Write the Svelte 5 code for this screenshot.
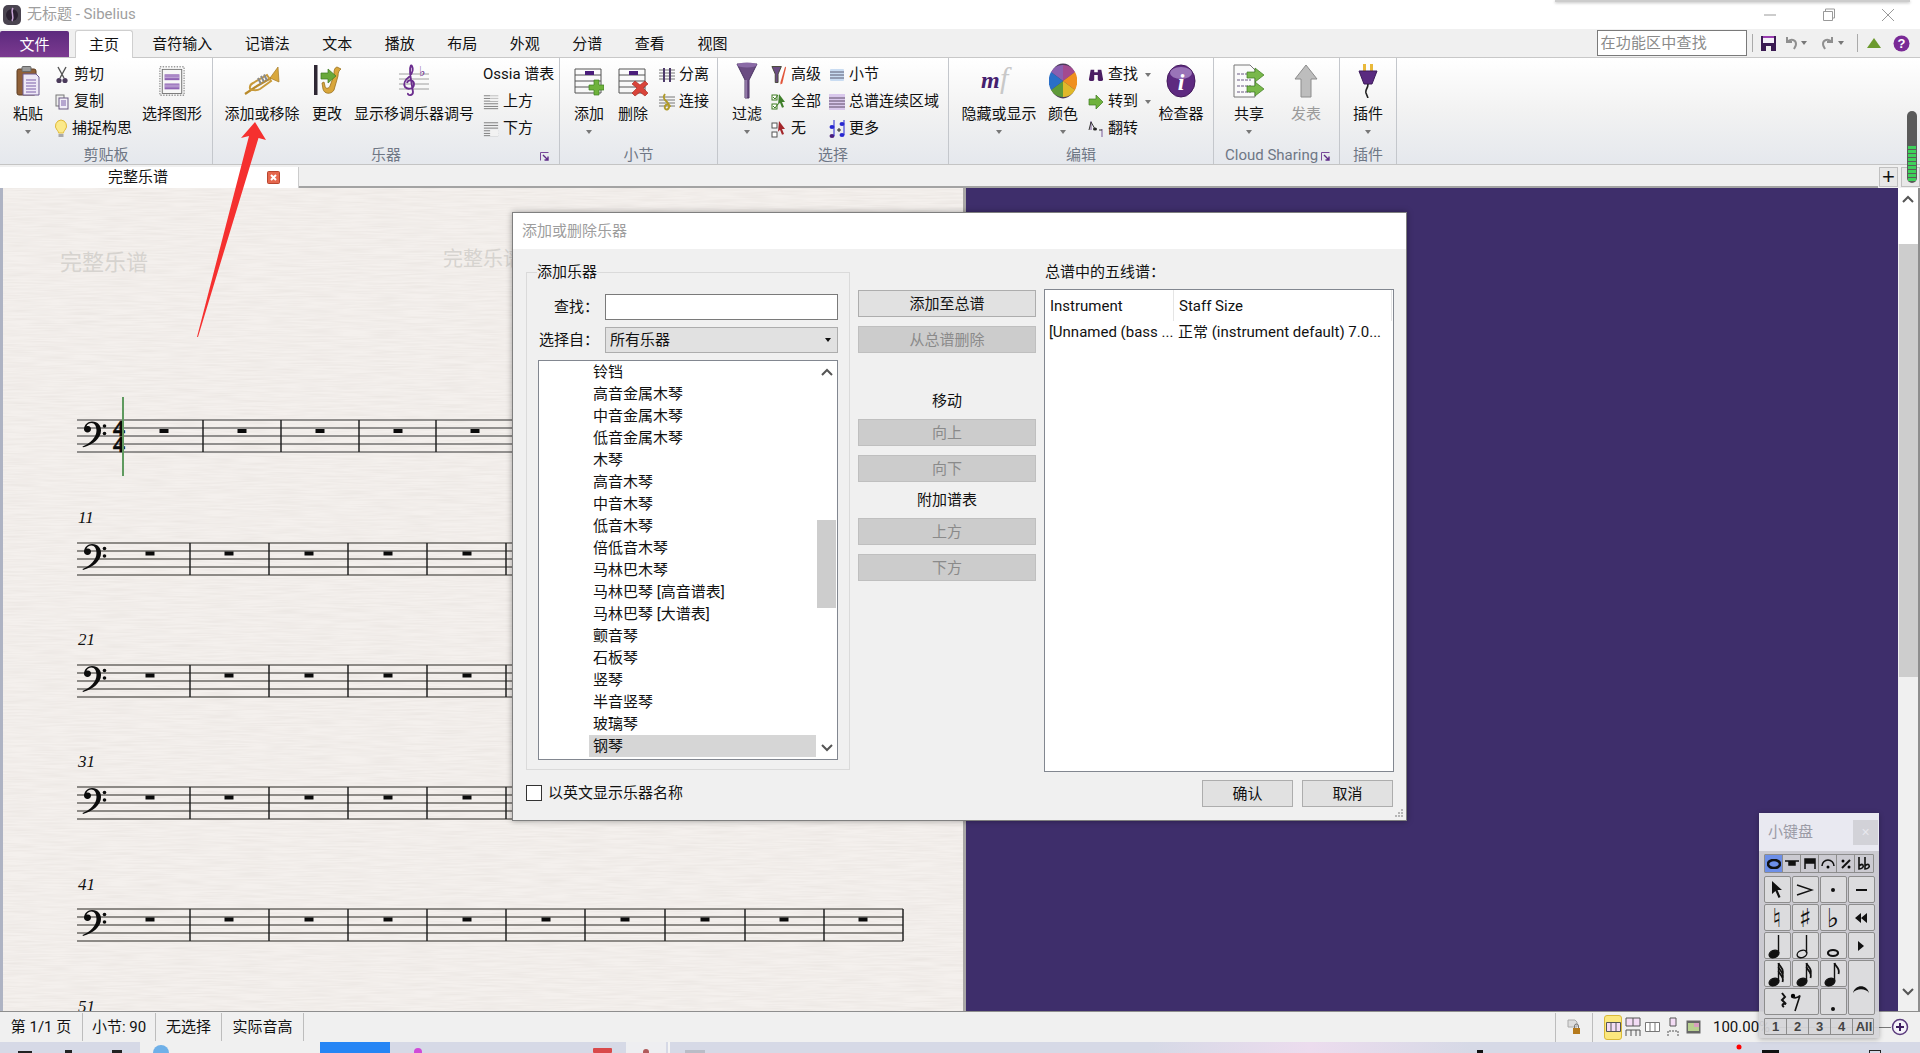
<script>
  const tabs = ['音符输入', '记谱法', '文本', '播放', '布局', '外观', '分谱', '查看', '视图'];
  const listItems = ['铃铛', '高音金属木琴', '中音金属木琴', '低音金属木琴', '木琴', '高音木琴', '中音木琴', '低音木琴', '倍低音木琴', '马林巴木琴', '马林巴琴 [高音谱表]', '马林巴琴 [大谱表]', '颤音琴', '石板琴', '竖琴', '半音竖琴', '玻璃琴', '钢琴'];
  const staves = [
    { y: 543, label: '11', labelY: 523 },
    { y: 665, label: '21', labelY: 645 },
    { y: 787, label: '31', labelY: 767 },
    { y: 909, label: '41', labelY: 890 },
    { y: 1031, label: '51', labelY: 1012 }
  ].map((s) => ({ ...s, y: s.y - 188, labelY: s.labelY - 188 }));
  const bars = [190, 269, 348, 427, 506, 585, 665, 745, 824, 903];
  const rests = [150, 229, 309, 388, 467, 546, 625, 705, 784, 863];
  const firstBars = [203, 281, 359, 436, 514, 592, 670, 748, 826, 904];
  const firstRests = [164, 242, 320, 398, 475, 553, 631, 709, 787, 865];
  const lineOffsets = [0, 8, 16, 24, 32];
</script>

{#snippet ic(name)}
  {#if name === 'paste'}
    <svg width="24" height="30" viewBox="0 0 24 30"><rect x="1" y="3" width="19" height="26" rx="2" fill="#8f6038" stroke="#5c3d22"/><rect x="6" y="0.5" width="9" height="5" rx="1" fill="#9a9a9a" stroke="#666"/><path d="M7 8h13l3 3v18H7z" fill="#eee8f6" stroke="#6d5a92"/><path d="M10 14h10M10 17h10M10 20h10M10 23h10M10 26h10" stroke="#7a5ea8" stroke-width="1.2"/></svg>
  {:else if name === 'cut'}
    <svg width="14" height="18" viewBox="0 0 14 18"><path d="M3 1l6 11M11 1L5 12" stroke="#555" stroke-width="1.4" fill="none"/><circle cx="4" cy="14.5" r="2.6" fill="#4a3a5a"/><circle cx="10" cy="14.5" r="2.6" fill="#4a3a5a"/></svg>
  {:else if name === 'copy'}
    <svg width="14" height="16" viewBox="0 0 14 16"><rect x="1" y="1" width="8" height="11" fill="#eee" stroke="#777"/><rect x="4" y="4" width="9" height="11" fill="#f2eef8" stroke="#6a5a84"/><path d="M6 7h5M6 9h5M6 11h5" stroke="#7a5ea8"/></svg>
  {:else if name === 'bulb'}
    <svg width="14" height="20" viewBox="0 0 14 20"><path d="M7 1a6 6 0 0 1 4 10c-1 1-1.500 2-1.500 3h-5c0-1-.5-2-1.500-3A6 6 0 0 1 7 1z" fill="#fbe98a" stroke="#e0b93a"/><rect x="4.500" y="15" width="5" height="3" fill="#a9a9a9"/></svg>
  {:else if name === 'graphic'}
    <svg width="26" height="30" viewBox="0 0 28 36" preserveAspectRatio="none"><rect x="1" y="1" width="26" height="34" fill="none" stroke="#555" stroke-dasharray="1.500 1.500"/><rect x="3.500" y="4" width="21" height="29" fill="#f7f7f7" stroke="#666"/><rect x="6" y="10" width="16" height="7" fill="#8f63b4"/><rect x="6" y="21" width="16" height="7" fill="#8f63b4"/><path d="M6 12h16M6 14h16M6 23h16M6 25h16" stroke="#e7dcf2" stroke-width=".7"/></svg>
  {:else if name === 'trumpet'}
    <svg width="36" height="30" viewBox="0 0 36 30"><path d="M1 28l12-8 14-8" stroke="#b98a2a" stroke-width="2.200" fill="none"/><path d="M8 24c-3 0-3-5 1-7l14-8 4 6-11 8c-3 2-6 1-8 1z" fill="none" stroke="#c89a3a" stroke-width="2"/><path d="M26 12L34 1l1 15z" fill="#d9a83d" stroke="#a57a24" stroke-width=".7"/><path d="M14 12l3 6M17 10l3 6M20 8.500l3 6" stroke="#8a8a8a" stroke-width="2"/></svg>
  {:else if name === 'change'}
    <svg width="32" height="32" viewBox="0 0 32 32"><rect x="3" y="0" width="3.500" height="30" fill="#2e2733"/><path d="M26 2c-3 1-3 4-3 8l-4 11c-1 3-5 3-5 0l-1-4-2 1 1 6c1 5 8 6 11 1l4-14c0-3 1-6 3-7z" fill="#d9a63b" stroke="#98701d" stroke-width=".8"/><path d="M10 8h7V4l8 7-8 7v-4h-7z" fill="#69a83a" stroke="#3d7a20" stroke-width=".7"/></svg>
  {:else if name === 'key'}
    <svg width="30" height="34" viewBox="0 0 30 34"><path d="M0 10h30M0 15h30M0 20h30M0 25h30" stroke="#888" stroke-width=".8"/><path d="M12 1c3 3 2 8-2 12-4 3-6 7-4 10 3 3 9 2 9-3 0-4-6-5-7-1M12 1c-2 4-1 9 2 27 0 4-6 4-5 1" fill="none" stroke="#6b2d8e" stroke-width="1.800"/><text x="20" y="12" class="flat">♭</text></svg>
  {:else if name === 'up' || name === 'down'}
    <svg width="18" height="18" viewBox="0 0 18 18"><path d="M1 2h16M1 5h16M1 8h16M1 11h16M1 14h16M1 16.500h16" stroke="#666" stroke-width=".9"/>{#if name === 'up'}<rect x="8" y="1" width="9" height="7" fill="#f2f2f2"/><path d="M8 2h9M8 5h9" stroke="#bbb"/>{:else}<rect x="8" y="10" width="9" height="7" fill="#f2f2f2"/>{/if}</svg>
  {:else if name === 'addbar' || name === 'delbar'}
    <svg width="30" height="32" viewBox="0 0 30 32"><path d="M1 4h26M1 10h26M1 16h26M1 22h26M1 28h26" stroke="#555"/><path d="M1 4v24M27 4v24" stroke="#555"/><rect x="11" y="6" width="9" height="4" fill="#4a1d7a"/>{#if name === 'addbar'}<path d="M20 15h5v5h5v5h-5v5h-5v-5h-5v-5h5z" fill="#6fb23c" stroke="#3e7f20" stroke-width=".7"/>{:else}<path d="M14 19l3-3 5 4 5-4 3 3-5 4 5 5-3 3-5-4-5 4-3-3 5-5z" fill="#d9443a" stroke="#a02218" stroke-width=".6"/>{/if}</svg>
  {:else if name === 'split'}
    <svg width="16" height="16" viewBox="0 0 16 16"><path d="M0 3h16M0 6h16M0 9h16M0 12h16" stroke="#777"/><path d="M5 1v14M11 1v14" stroke="#4d3a6a" stroke-width="2"/></svg>
  {:else if name === 'join'}
    <svg width="16" height="18" viewBox="0 0 16 18"><path d="M0 4h16M0 7h16M0 10h16M0 13h16" stroke="#777"/><path d="M6 1c-3 4 0 6 2 8s3 5 1 7c-2 1-4 0-3-3 1-2 5-2 5 1" fill="none" stroke="#b09a2a" stroke-width="2"/></svg>
  {:else if name === 'funnel'}
    <svg width="22" height="38" viewBox="0 0 22 38"><path d="M1 2h20l-8 16v18h-4V18z" fill="#6a4c82" stroke="#4a3362"/><ellipse cx="11" cy="3" rx="10" ry="2.500" fill="#8a6aa6"/><path d="M10 18v18" stroke="#b9a6cc"/></svg>
  {:else if name === 'advfilter'}
    <svg width="17" height="20" viewBox="0 0 17 20"><path d="M1 1h10L7.500 9v9h-3V9z" fill="#6a4c82" stroke="#443"/><path d="M15 1l1 1-4 17-2 1 0-2z" fill="#e2553a"/></svg>
  {:else if name === 'all'}
    <svg width="16" height="18" viewBox="0 0 16 18"><rect x="1" y="2" width="5" height="5" fill="#fff" stroke="#3d7a20"/><rect x="1" y="11" width="5" height="5" fill="#fff" stroke="#3d7a20"/><path d="M8 1l6 8-3 0 2 5-2 .8-2-5-2 2z" fill="#3f7f2a"/><path d="M2 4l2 2 3-4M2 13l2 2 3-4" stroke="#3d7a20" fill="none"/></svg>
  {:else if name === 'none'}
    <svg width="16" height="18" viewBox="0 0 16 18"><rect x="1" y="3" width="5" height="5" fill="#fff" stroke="#555"/><rect x="1" y="12" width="5" height="5" fill="#fff" stroke="#555"/><path d="M8 1l6 8-3 0 2 5-2 .8-2-5-2 2z" fill="#a3262a"/></svg>
  {:else if name === 'bar'}
    <svg width="16" height="14" viewBox="0 0 16 14"><rect x="1" y="1" width="14" height="12" rx="1" fill="#c9dcf2"/><path d="M1 4h14M1 7h14M1 10h14" stroke="#5c5c72"/></svg>
  {:else if name === 'system'}
    <svg width="16" height="16" viewBox="0 0 16 16"><rect x="0" y="0" width="16" height="16" fill="#d9c8ec"/><path d="M0 4h16M0 7h16M0 10h16M0 13h16" stroke="#5c4a66"/></svg>
  {:else if name === 'more'}
    <svg width="16" height="20" viewBox="0 0 16 20"><ellipse cx="3" cy="8" rx="2.500" ry="2" fill="#2727d0"/><ellipse cx="3" cy="17" rx="2.500" ry="2" fill="#4a1d7a"/><ellipse cx="13" cy="5" rx="2.500" ry="2" fill="#2727d0"/><ellipse cx="13" cy="16" rx="2.500" ry="2" fill="#2727d0"/><path d="M5 1v16M15 1v15" stroke="#2727d0"/><path d="M8 11h4M10 9v4" stroke="#222"/></svg>
  {:else if name === 'mf'}
    <svg width="36" height="34" viewBox="0 0 36 34"><text x="0" y="24" class="mf1">m</text><text x="19" y="24" class="mf2">f</text></svg>
  {:else if name === 'wheel'}
    <svg width="28" height="36" viewBox="-14 -18 28 36"><ellipse rx="13.500" ry="17.500" fill="#4a3a5a"/><path d="M0 0L-12-9A14 17 0 0 1 0-16z" fill="#8a5fb0"/><path d="M0 0L0-16A14 17 0 0 1 12-9z" fill="#a34a90"/><path d="M0 0L12-9A14 17 0 0 1 12 9z" fill="#f09020"/><path d="M0 0L12 9A14 17 0 0 1 0 16z" fill="#e0b82a"/><path d="M0 0L0 16A14 17 0 0 1-12 9z" fill="#5f9a38"/><path d="M0 0L-12 9A14 17 0 0 1-12-9z" fill="#2a6fc8"/></svg>
  {:else if name === 'find'}
    <svg width="18" height="18" viewBox="0 0 18 16"><path d="M1 13l2-11h4v3h4V2h4l2 11c0 2.500-6 2.500-6 0V8H7v5c0 2.500-6 2.500-6 0z" fill="#4a1d62"/></svg>
  {:else if name === 'goto'}
    <svg width="16" height="14" viewBox="0 0 16 14"><path d="M1 4h7V0l7 7-7 7v-4H1z" fill="#6fb23c" stroke="#3d7a20" stroke-width=".7"/></svg>
  {:else if name === 'flip'}
    <svg width="16" height="18" viewBox="0 0 16 18"><path d="M3 1v9M14 9v8" stroke="#7a5a9a"/><ellipse cx="7" cy="9" rx="2" ry="1.500" fill="#222"/><path d="M1 10l2-8 4 7M11 10l3 0" stroke="#333" fill="none"/></svg>
  {:else if name === 'info'}
    <svg width="30" height="34" viewBox="0 0 30 34"><ellipse cx="15" cy="17" rx="14" ry="16" fill="#5e2a80" stroke="#43195c"/><ellipse cx="15" cy="9" rx="11" ry="6" fill="#9a74b8"/><text x="15" y="26" class="itxt">i</text></svg>
  {:else if name === 'share'}
    <svg width="32" height="34" viewBox="0 0 32 34"><path d="M1 1h16l5 5v27H1z" fill="#fafafa" stroke="#777"/><path d="M4 10h14M4 16h14M4 22h14M4 28h14" stroke="#6a5a84" stroke-dasharray="3 1"/><path d="M14 8h8V4l9 7-9 7v-4h-8z" fill="#79b84a" stroke="#3d7a20" stroke-width=".7"/><path d="M14 22h8v-4l9 7-9 7v-4h-8z" fill="#79b84a" stroke="#3d7a20" stroke-width=".7"/></svg>
  {:else if name === 'publish'}
    <svg width="24" height="34" viewBox="0 0 24 34"><path d="M12 1l11 14h-6v18H7V15H1z" fill="#bdbdbd" stroke="#8c8c8c"/></svg>
  {:else if name === 'plug'}
    <svg width="22" height="34" viewBox="0 0 22 34"><rect x="6" y="0" width="3" height="8" fill="#e9b93a"/><rect x="13" y="0" width="3" height="8" fill="#e9b93a"/><path d="M2 7h18l-5 13H7z" fill="#5a2a80" stroke="#3c1a5a"/><path d="M11 20c0 5-3 5-2 9l2 5" stroke="#222" stroke-width="1.600" fill="none"/></svg>
  {/if}
{/snippet}

{#snippet big(label, cls, name, arrow = true, off = false)}
  <div class="big {cls}" class:off>
    <div class="bi">{@render ic(name)}</div>
    <div class="bl">{label}</div>
    {#if arrow}<div class="caret"></div>{/if}
  </div>
{/snippet}

{#snippet small(label, name, arrow = false)}
  <div class="small">
    {#if name}<span class="si">{@render ic(name)}</span>{/if}
    <span>{label}</span>
    {#if arrow}<span class="caret tiny"></span>{/if}
  </div>
{/snippet}

{#snippet launcher()}
  <svg class="launch" width="9" height="9" viewBox="0 0 9 9"><path d="M.5 8.500v-8h8" fill="none" stroke="#7a4a9a"/><path d="M3 3l5 5M8 4.500V8H4.500" fill="none" stroke="#5f2a86" stroke-width="1.400"/></svg>
{/snippet}

{#snippet note(flags, kind)}
  <svg width="20" height="26" viewBox="0 0 20 26">
    {#if kind === 'whole'}
      <ellipse cx="10" cy="20" rx="5" ry="3" fill="none" stroke="#111" stroke-width="2.200"/>
    {:else}
      <ellipse cx="7" cy="21" rx="5" ry="3.500" transform="rotate(-20 7 21)" fill={kind === 'half' ? 'none' : '#111'} stroke="#111" stroke-width="1.400"/>
      <path d="M11.500 20V2" stroke="#111" stroke-width="1.400"/>
      {#each Array(flags) as _, i}
        <path d="M11.500 {2 + i * 4}c1 4 6 5 4 11" fill="none" stroke="#111" stroke-width="1.800"/>
      {/each}
    {/if}
  </svg>
{/snippet}

<svg class="defs" width="0" height="0">
  <defs>
    <filter id="fibre" x="0" y="0" width="100%" height="100%">
      <feTurbulence type="fractalNoise" baseFrequency="0.03 0.6" numOctaves="2" seed="4"/>
      <feColorMatrix type="matrix" values="0 0 0 0 0.45  0 0 0 0 0.4  0 0 0 0 0.36  0.22 0 0 0 -0.07"/>
    </filter>
    <linearGradient id="tbglow" x1="0" x2="1" y1="0" y2="0">
      <stop offset="0" stop-color="#d6d9e6"/><stop offset=".5" stop-color="#ecdcee"/><stop offset="1" stop-color="#d6d9e6"/>
    </linearGradient>
  </defs>
  <symbol id="bass" viewBox="0 0 26 27">
    <path d="M3 9C3 4 7 1 11 1c6 0 9 4 9 9 0 8-8 14-18 17l-.5-1c7.500-3 14-9 14-16 0-4.500-2-7.500-5-7.500-2.500 0-4.500 1.500-5 3.500.5-.4 1-.5 1.500-.5 2 0 3 1.500 3 3 0 2-1.500 3.500-3.500 3.500S3 10.500 3 9z" fill="#0c0c0c"/>
    <circle cx="23.500" cy="5.500" r="1.800" fill="#0c0c0c"/><circle cx="23.500" cy="13" r="1.800" fill="#0c0c0c"/>
  </symbol>
</svg>

<div class="app">
  <header class="title">
    <svg width="18" height="20" viewBox="0 0 18 20"><rect x="0" y="0" width="18" height="20" rx="5" fill="#4a4450"/><circle cx="9" cy="10" r="6" fill="#2a2030"/><path d="M10 3c-3 4 2 8-1 13" stroke="#c9a7d8" stroke-width="1.500" fill="none"/></svg>
    <span class="wintitle">无标题 - Sibelius</span>
    <div class="winbtns">
      <svg width="14" height="14" viewBox="0 0 14 14"><path d="M1 7h12" stroke="#999"/></svg>
      <svg width="14" height="14" viewBox="0 0 14 14"><path d="M3.500 3V1h9v9h-2M1.500 3.500h9v9h-9z" fill="none" stroke="#999"/></svg>
      <svg width="14" height="14" viewBox="0 0 14 14"><path d="M1 1l12 12M13 1L1 13" stroke="#999"/></svg>
    </div>
  </header>

  <nav class="menu">
    <div class="file">文件</div>
    <div class="home">主页</div>
    {#each tabs as t}<div class="mtab">{t}</div>{/each}
    <div class="qa">
      <div class="search">在功能区中查找</div>
      <i class="qsep"></i>
      <svg width="15" height="15" viewBox="0 0 15 15"><path d="M0 0h15v15H0z" fill="#3a1a52"/><rect x="2" y="0" width="11" height="7" fill="#f4f0f8"/><rect x="2" y="0" width="11" height="2" fill="#9a3db0"/><rect x="5" y="10" width="5" height="5" fill="#f0f0f0"/></svg>
      <svg class="q1" width="14" height="14" viewBox="0 0 14 14"><path d="M3 1v5h5M3 6c4-4 9-2 9 2 0 2-1 3-2 5" fill="none" stroke="#8f8f8f" stroke-width="2"/></svg>
      <span class="caret tiny q2"></span>
      <svg class="q3" width="14" height="14" viewBox="0 0 14 14"><path d="M11 1v5H6M11 6C7 2 2 4 2 8c0 2 1 3 2 5" fill="none" stroke="#8f8f8f" stroke-width="2"/></svg>
      <span class="caret tiny q4"></span>
      <i class="qsep q5"></i>
      <svg class="q6" width="14" height="10" viewBox="0 0 14 10"><path d="M7 0l7 10H0z" fill="#6c9a2e"/></svg>
      <svg class="q7" width="17" height="17" viewBox="0 0 17 17"><circle cx="8.500" cy="8.500" r="8" fill="#7a2a96"/><text x="8.500" y="13" class="help">?</text></svg>
    </div>
  </nav>

  <section class="ribbon">
    <div class="grp g1">
      <div class="gi">
        {@render big('粘贴', 'w56', 'paste')}
        <div class="col c76">
          {@render small('剪切', 'cut')}
          {@render small('复制', 'copy')}
          {@render small('捕捉构思', 'bulb')}
        </div>
        {@render big('选择图形', 'w80', 'graphic', false)}
      </div>
      <div class="gl">剪贴板</div>
    </div>
    <div class="grp g2">
      <div class="gi pad5">
        {@render big('添加或移除', 'w88', 'trumpet', false)}
        {@render big('更改', 'w42', 'change', false)}
        {@render big('显示移调乐器调号', 'w132', 'key', false)}
        <div class="col pl3">
          {@render small('Ossia 谱表', '')}
          {@render small('上方', 'up')}
          {@render small('下方', 'down')}
        </div>
      </div>
      <div class="gl">乐器{@render launcher()}</div>
    </div>
    <div class="grp g3">
      <div class="gi pad7">
        {@render big('添加', 'w44', 'addbar')}
        {@render big('删除', 'w44', 'delbar', false)}
        <div class="col pl4">
          {@render small('分离', 'split')}
          {@render small('连接', 'join')}
        </div>
      </div>
      <div class="gl">小节</div>
    </div>
    <div class="grp g4">
      <div class="gi pad7">
        {@render big('过滤', 'w44', 'funnel')}
        <div class="col w60 pl1">
          {@render small('高级', 'advfilter')}
          {@render small('全部', 'all')}
          {@render small('无', 'none')}
        </div>
        <div class="col">
          {@render small('小节', 'bar')}
          {@render small('总谱连续区域', 'system')}
          {@render small('更多', 'more')}
        </div>
      </div>
      <div class="gl">选择</div>
    </div>
    <div class="grp g5">
      <div class="gi pad5">
        {@render big('隐藏或显示', 'w90', 'mf')}
        {@render big('颜色', 'w38', 'wheel')}
        <div class="col w68 pl7">
          {@render small('查找', 'find', true)}
          {@render small('转到', 'goto', true)}
          {@render small('翻转', 'flip')}
        </div>
        {@render big('检查器', 'w62', 'info', false)}
      </div>
      <div class="gl">编辑</div>
    </div>
    <div class="grp g6">
      <div class="gi pad7">
        {@render big('共享', 'w56', 'share')}
        {@render big('发表', 'w58', 'publish', false, true)}
      </div>
      <div class="gl">Cloud Sharing{@render launcher()}</div>
    </div>
    <div class="grp g7">
      <div class="gi">{@render big('插件', 'w56', 'plug')}</div>
      <div class="gl">插件</div>
    </div>
    <div class="meter">
      {#each Array(9) as _}<i></i>{/each}
    </div>
  </section>

  <div class="doctabs">
    <div class="doctab">
      <span>完整乐谱</span>
      <svg width="13" height="13" viewBox="0 0 13 13"><rect x=".5" y=".5" width="12" height="12" rx="1" fill="#e5664c" stroke="#b8452e"/><path d="M4 4l5 5M9 4L4 9" stroke="#fff" stroke-width="2"/></svg>
    </div>
    <div class="tabline"></div>
    <div class="dtb">+</div>
    <div class="dtb narrow"></div>
  </div>

  <main class="main">
    <div class="paper">
      <svg width="962" height="824" viewBox="0 0 962 824">
        <rect width="962" height="824" filter="url(#fibre)"/>
        <text x="57" y="82" class="wm">完整乐谱</text>
        <text x="440" y="78" class="wm wm2">完整乐谱</text>
        {#each lineOffsets as o}
          <line x1="74" x2="950" y1={232 + o} y2={232 + o} class="thin"/>
        {/each}
        {#each firstBars as b}
          <line x1={b - 3} x2={b - 3} y1="232" y2="264" class="barl"/>
        {/each}
        {#each firstRests as r}
          <rect x={r - 7.500} y="241" width="9" height="4" fill="#0a0a0a"/>
        {/each}
        <use href="#bass" x="78" y="232.500" width="26" height="27"/>
        <text x="110" y="248" class="ts">4</text>
        <text x="110" y="264" class="ts">4</text>
        <rect x="119" y="209" width="2" height="79" fill="#5f9a5f"/>
        {#each staves as s}
          {#each lineOffsets as o}
            <line x1="74" x2="900" y1={s.y + o} y2={s.y + o} class="thick"/>
          {/each}
          {#each bars as b}
            <line x1={b - 3} x2={b - 3} y1={s.y} y2={s.y + 32} class="barl"/>
          {/each}
          {#each rests as r}
            <rect x={r - 7.500} y={s.y + 8.500} width="9" height="4" fill="#0a0a0a"/>
          {/each}
          <use href="#bass" x="78" y={s.y} width="26" height="27"/>
          <text x="75" y={s.labelY} class="mno">{s.label}</text>
        {/each}
      </svg>
    </div>
    <div class="desk"></div>
    <div class="vscroll">
      <svg width="20" height="14" viewBox="0 0 20 14"><path d="M5 10l5-5 5 5" fill="none" stroke="#555" stroke-width="2"/></svg>
      <div class="vthumb"></div>
      <svg class="vdown" width="20" height="14" viewBox="0 0 20 14"><path d="M5 4l5 5 5-5" fill="none" stroke="#555" stroke-width="2"/></svg>
    </div>
  </main>

  <footer class="status">
    <div class="st s1">第 1/1 页</div>
    <div class="st s2">小节: 90</div>
    <div class="st s3">无选择</div>
    <div class="st s4">实际音高</div>
    <div class="st-right">
      <i class="stsep"></i>
      <svg class="lock" width="14" height="16" viewBox="0 0 14 16"><path d="M1 1h7l2 2v5H1z" fill="#ddd" stroke="#aaa"/><rect x="6" y="9" width="7" height="6" fill="#b57a1d"/><path d="M7.500 9V7a2 2 0 0 1 4 0v2" fill="none" stroke="#777"/></svg>
      <i class="stsep"></i>
      <div class="vw on"><svg width="15" height="10" viewBox="0 0 15 10"><path d="M.5.500h14v9H.5zM5 .5v9M10 .5v9" fill="#f3dcf5" stroke="#555"/></svg></div>
      <div class="vw"><svg width="16" height="20" viewBox="0 0 16 20"><path d="M1 1h14v8H1zM8 1v8" fill="#f3dcf5" stroke="#555"/><path d="M1 19v-6h14v6M6 13v6M11 13v6" fill="none" stroke="#555"/></svg></div>
      <div class="vw"><svg width="16" height="10" viewBox="0 0 16 10"><path d="M.5.500h14v9H.5zM5 .5v9M10 .5v9" fill="#fff" stroke="#777"/></svg></div>
      <div class="vw"><svg width="12" height="20" viewBox="0 0 12 20"><path d="M3 1h6v8H3z" fill="#f3dcf5" stroke="#555"/><path d="M1 19v-5h10v5" fill="none" stroke="#555" stroke-dasharray="2 1"/></svg></div>
      <div class="vw"><svg width="15" height="14" viewBox="0 0 15 14"><rect x=".5" y=".5" width="14" height="13" fill="#666"/><rect x="2" y="3" width="11" height="8" fill="#b8d090"/><rect x="8" y="3" width="5" height="4" fill="#d9a0c0"/></svg></div>
      <span class="zoomv">100.00%</span>
      <div class="slider"></div>
      <svg class="plus" width="18" height="18" viewBox="0 0 18 18"><circle cx="9" cy="9" r="7.500" fill="#f4f2f8" stroke="#5a3a7c" stroke-width="1.500"/><path d="M5 9h8M9 5v8" stroke="#3e1d60" stroke-width="2"/></svg>
    </div>
  </footer>

  <div class="taskbar">
    <svg width="1920" height="11" viewBox="0 0 1920 11">
      <rect width="1920" height="11" fill="#d6d9e6"/>
      <rect x="140" width="180" height="11" fill="#f0f0f0"/>
      <rect x="320" width="70" height="11" fill="#2585f5"/>
      <rect x="626" width="40" height="11" fill="#eeeef1"/>
      <rect x="668" width="2" height="11" fill="#f4f4f4"/>
      <rect x="1150" width="320" height="11" fill="url(#tbglow)"/>
      <rect x="18" y="9" width="14" height="2" fill="#222"/><rect x="65" y="8" width="7" height="3" fill="#222"/><rect x="112" y="8" width="10" height="3" fill="#222"/>
      <circle cx="161" cy="11" r="8" fill="#6fb0e8"/>
      <circle cx="418" cy="10" r="4" fill="#d04ad8"/>
      <rect x="593" y="6" width="19" height="5" rx="1" fill="#d9494a"/>
      <circle cx="646" cy="10" r="3" fill="#b05a5a"/>
      <rect x="685" y="8" width="20" height="3" fill="#b9bcc6"/>
      <circle cx="1739" cy="5" r="2.500" fill="#f00"/>
      <rect x="1477" y="8" width="6" height="3" fill="#111"/>
      <rect x="1762" y="8" width="17" height="3" fill="#111"/>
      <rect x="1869.500" y="8.500" width="11" height="3" fill="none" stroke="#222"/>
    </svg>
  </div>

  <!-- red annotation arrow -->
  <svg class="arrow" width="80" height="225" viewBox="0 0 80 225">
    <path d="M63 2L74 20 66.500 18 6 217 5 217 57 16 49 18z" fill="#f5302f"/>
  </svg>

  <!-- floating dialog -->
  <div class="dlg">
    <div class="dlgtitle">添加或删除乐器</div>
    <div class="dlgbody">
      <div class="left">
        <div class="gbox">
          <div class="legend">添加乐器</div>
          <div class="frow first"><label for="findbox">查找：</label><input id="findbox" class="field" /></div>
          <div class="frow"><span class="flabel">选择自：</span><div class="combo">所有乐器<span class="cbarrow"></span></div></div>
          <div class="lbox">
            <div class="litems">
              {#each listItems as it, i}
                <div class="li" class:sel={i === listItems.length - 1}>{it}</div>
              {/each}
            </div>
            <div class="lscroll">
              <svg width="20" height="22" viewBox="0 0 20 22"><path d="M5 14l5-5 5 5" fill="none" stroke="#555" stroke-width="2"/></svg>
              <div class="lthumb"></div>
              <svg class="vdown" width="20" height="22" viewBox="0 0 20 22"><path d="M5 8l5 5 5-5" fill="none" stroke="#555" stroke-width="2"/></svg>
            </div>
          </div>
        </div>
        <div class="chk"><span class="cb"></span>以英文显示乐器名称</div>
      </div>
      <div class="mid">
        <div class="btn">添加至总谱</div>
        <div class="btn dis mt9">从总谱删除</div>
        <div class="mlabel ml1">移动</div>
        <div class="btn dis">向上</div>
        <div class="btn dis mt9">向下</div>
        <div class="mlabel ml2">附加谱表</div>
        <div class="btn dis">上方</div>
        <div class="btn dis mt9">下方</div>
      </div>
      <div class="right">
        <div class="rlabel">总谱中的五线谱：</div>
        <div class="tbl">
          <div class="trow head"><div class="c1">Instrument</div><div class="c2">Staff Size</div></div>
          <div class="trow body"><div class="c1">[Unnamed (bass ...</div><div class="c2">正常 (instrument default) 7.0...</div></div>
        </div>
        <div class="okrow"><div class="btn okb">确认</div><div class="btn okb">取消</div></div>
      </div>
    </div>
    <svg class="grip" width="10" height="10" viewBox="0 0 10 10"><path d="M7 1h2v2H7zM4 4h2v2H4zM7 4h2v2H7zM1 7h2v2H1zM4 7h2v2H4zM7 7h2v2H7z" fill="#b5b5b5"/></svg>
  </div>

  <!-- floating keypad -->
  <div class="keypad">
    <div class="kphead"><span>小键盘</span><div class="kpx">×</div></div>
    <div class="kptabs">
      <div class="kt on"><svg width="14" height="10" viewBox="0 0 14 10"><ellipse cx="7" cy="5" rx="6" ry="4" fill="none" stroke="#111" stroke-width="2.600"/></svg></div>
      <div class="kt"><svg width="14" height="8" viewBox="0 0 14 8"><path d="M0 1h14M4 1h6v4H4z" stroke="#111" stroke-width="1.500" fill="#111"/></svg></div>
      <div class="kt"><svg width="12" height="12" viewBox="0 0 12 12"><path d="M1 1h10v4H1zM1 5v6M11 5v6" stroke="#111" stroke-width="1.500" fill="#111"/></svg></div>
      <div class="kt"><svg width="14" height="12" viewBox="0 0 14 12"><path d="M1 8a6 6 0 0 1 12 0" fill="none" stroke="#111" stroke-width="1.600"/><circle cx="7" cy="9" r="1.500"/></svg></div>
      <div class="kt"><svg width="12" height="12" viewBox="0 0 12 12"><path d="M2 10L10 2" stroke="#111" stroke-width="2"/><circle cx="3" cy="3" r="1.500"/><circle cx="9" cy="9" r="1.500"/></svg></div>
      <div class="kt"><svg width="14" height="13" viewBox="0 0 14 13"><path d="M2 0v12c3 0 5-2 4-4-1-1-3 0-4 1M8 0v12c3 0 5-2 4-4-1-1-3 0-4 1" fill="none" stroke="#111" stroke-width="1.600"/></svg></div>
    </div>
    <div class="kpgrid">
      <div class="kc"><svg width="12" height="18" viewBox="0 0 12 18"><path d="M1 0l10 9-4.500 0 3 7-2 1-3-7-3.500 3z" fill="#111"/></svg></div>
      <div class="kc"><svg width="18" height="12" viewBox="0 0 18 12"><path d="M1 1l15 5-15 5" fill="none" stroke="#111" stroke-width="1.500"/></svg></div>
      <div class="kc"><i class="dot"></i></div>
      <div class="kc"><i class="dash"></i></div>
      <div class="kc"><span class="kg">♮</span></div>
      <div class="kc"><span class="kg">♯</span></div>
      <div class="kc"><span class="kg">♭</span></div>
      <div class="kc"><svg width="12" height="10" viewBox="0 0 12 10"><path d="M6 0v10L0 5zM12 0v10L6 5z" fill="#111"/></svg></div>
      <div class="kc">{@render note(0, 'q')}</div>
      <div class="kc">{@render note(0, 'half')}</div>
      <div class="kc">{@render note(0, 'whole')}</div>
      <div class="kc"><svg width="6" height="10" viewBox="0 0 6 10"><path d="M0 0l6 5-6 5z" fill="#111"/></svg></div>
      <div class="kc">{@render note(3, 'q')}</div>
      <div class="kc">{@render note(2, 'q')}</div>
      <div class="kc">{@render note(1, 'q')}</div>
      <div class="kc tall"><svg width="18" height="12" viewBox="0 0 18 12"><path d="M1 11C3 2 15 2 17 11C14 6 4 6 1 11z" fill="#111"/></svg></div>
      <div class="kc wide"><svg width="24" height="20" viewBox="0 0 24 20"><path d="M3 1l3 4-3 3 4 4c-3-1-5 1-2 3" fill="none" stroke="#111" stroke-width="2"/><circle cx="14" cy="4" r="2.200"/><path d="M14 5.500c3 1 5 0 7-2L16 19" fill="none" stroke="#111" stroke-width="1.600"/></svg></div>
      <div class="kc dotbottom"><i class="dot"></i></div>
    </div>
    <div class="kpnums"><div>1</div><div>2</div><div>3</div><div>4</div><div>All</div></div>
  </div>
</div>

<style>
  :global(body) { margin: 0; overflow: hidden; background: #f0f0f0; }
  .defs { display: block; height: 0; }
  .app {
    position: relative; width: 1920px; height: 1053px; overflow: hidden;
    display: flex; flex-direction: column;
    font: 15px/1 Roboto, "Noto Sans CJK SC", sans-serif; color: #111;
  }
  .title { height: 29px; flex: none; background: #fff; display: flex; align-items: center; padding-left: 3px; position: relative; box-sizing: border-box; }
  .title::after { content: ''; position: absolute; left: 1555px; width: 355px; top: 0; height: 2px; background: #ccc; box-shadow: 0 1px 3px #bbb; }
  .wintitle { margin-left: 6px; color: #9f9f9f; }
  .winbtns { margin-left: auto; display: flex; gap: 45px; padding-right: 25px; }

  .menu { height: 29px; flex: none; background: #f0f0f0; display: flex; align-items: flex-end; box-sizing: border-box; border-bottom: 1px solid #c8c8c8; }
  .file { width: 69px; height: 26px; padding-top: 2px; box-sizing: border-box; background: linear-gradient(#5d2a7e, #7b3a90); color: #fff; display: flex; align-items: center; justify-content: center; border-radius: 2px 2px 0 0; }
  .home { width: 58px; height: 28px; padding-top: 2px; margin: 0 3px -1px 6px; background: #fff; border: 1px solid #cfcfcf; border-bottom: 0; border-radius: 3px 3px 0 0; box-sizing: border-box; display: flex; align-items: center; justify-content: center; }
  .mtab { padding: 2px 16.250px 0; box-sizing: border-box; height: 27px; display: flex; align-items: center; }
  .qa { margin-left: auto; display: flex; align-items: center; height: 28px; padding-right: 10px; }
  .search { width: 150px; height: 26px; box-sizing: border-box; border: 1px solid #7a7a7a; background: #fff; color: #8a8a8a; display: flex; align-items: center; padding-left: 3px; letter-spacing: .2px; }
  .qsep { width: 1px; height: 18px; background: #aaa; margin: 0 8px 0 5px; }
  .q1 { margin-left: 8px; }
  .q2 { margin: 0 0 0 4px; }
  .q3 { margin-left: 14.500px; }
  .q4 { margin: 0 0 0 3px; }
  .q5 { margin: 0 0 0 13px; }
  .q6 { margin-left: 9px; }
  .q7 { margin-left: 12px; }
  .help { font: bold 13px "Liberation Sans", sans-serif; fill: #fff; text-anchor: middle; }

  .ribbon { height: 107px; flex: none; display: flex; box-sizing: border-box; background: linear-gradient(#fff, #f2f2f2 50%, #e5e8ed); border-bottom: 1px solid #c4c4c4; position: relative; }
  .grp { height: 106px; box-sizing: border-box; border-right: 1px solid #c4c7cc; display: flex; flex-direction: column; flex: none; }
  .g1 { width: 213px; } .g2 { width: 347px; } .g3 { width: 158px; } .g4 { width: 231px; }
  .g5 { width: 265px; } .g6 { width: 126px; } .g7 { width: 57px; }
  .gi { height: 88px; display: flex; flex: none; }
  .pad5 { padding-left: 5px; } .pad7 { padding-left: 7px; }
  .gl { height: 18px; display: flex; align-items: center; justify-content: center; color: #6f7785; position: relative; }
  .launch { position: absolute; right: 10px; top: 6px; }
  .g6 .launch { right: 9px; }
  .g6 .gl { justify-content: flex-start; padding-left: 11px; }

  .big { box-sizing: border-box; display: flex; flex-direction: column; align-items: center; padding-top: 6px; flex: none; }
  .bi { height: 34px; display: flex; align-items: center; justify-content: center; }
  .bl { height: 20px; margin-top: 6px; display: flex; align-items: center; white-space: nowrap; }
  .off .bl { color: #9a9a9a; }
  .caret { width: 0; height: 0; border: 3.500px solid transparent; border-top: 4px solid #777; border-bottom: 0; margin-top: 6px; }
  .caret.tiny { margin-top: 0; margin-left: 3px; display: inline-block; }
  .w56 { width: 56px; } .w80 { width: 80px; } .w88 { width: 88px; } .w42 { width: 42px; }
  .w132 { width: 132px; } .w44 { width: 44px; } .w90 { width: 90px; } .w38 { width: 38px; }
  .w62 { width: 62px; } .w58 { width: 58px; }
  .col { display: flex; flex-direction: column; padding-top: 3px; flex: none; box-sizing: border-box; }
  .c76 { width: 76px; margin-left: -2px; margin-right: 2px; }
  .w60 { width: 60px; } .w68 { width: 68px; }
  .pl1 { padding-left: 2px; } .pl3 { padding-left: 3px; } .pl4 { padding-left: 4px; } .pl7 { padding-left: 6px; }
  .small { height: 27px; display: flex; align-items: center; gap: 4px; white-space: nowrap; }
  .si { width: 16px; height: 20px; display: flex; align-items: center; justify-content: center; }
  .flat { font: 14px "DejaVu Sans", sans-serif; fill: #6b2d8e; }
  .mf1 { font: italic bold 24px "Liberation Serif", serif; fill: #45206e; }
  .mf2 { font: italic 30px "Liberation Serif", serif; fill: #c8c8c8; }
  .itxt { font: italic bold 24px "Liberation Serif", serif; fill: #fff; text-anchor: middle; }

  .meter { position: absolute; left: 1907px; top: 53px; width: 10px; height: 72px; background: #5a5a5a; border-radius: 5px; box-sizing: border-box; padding: 35px 1px 0; display: flex; flex-direction: column; gap: 1px; z-index: 3; }
  .meter i { display: block; height: 3px; background: #3ed05a; }

  .doctabs { height: 23px; flex: none; background: #f0f0f0; display: flex; align-items: flex-end; box-sizing: border-box; }
  .doctab { width: 299px; height: 21px; background: #fff; display: flex; align-items: center; position: relative; box-sizing: border-box; padding-left: 108px; gap: 100px; border-right: 1px solid #ccc; }
  .doctab svg { margin-left: -1px; }
  .dtb { position: relative; width: 19px; height: 20px; border: 1px solid #c0c0c0; background: #e8e8e8; display: flex; align-items: center; justify-content: center; font: 22px/1 "Liberation Sans", sans-serif; margin-bottom: 1px; margin-left: -1px; box-sizing: border-box; flex: none; }
  .tabline { width: 1579px; height: 2px; background: #a3a3a3; flex: none; margin-right: 2px; }
  .dtb.narrow { width: 19px; margin-left: 3px; }

  .main { flex: 1; min-height: 0; display: flex; background: #3e2e6b; border-bottom: 1px solid #8e8e8e; box-sizing: border-box; }
  .paper { width: 966px; flex: none; box-sizing: border-box; overflow: hidden; border-left: 3px solid #aeb3c3; border-right: 3px solid #a9a7a6; background: #f4f0ed; }
  .paper svg { display: block; }
  .wm { font: 22px "Noto Sans CJK SC", sans-serif; fill: #d6d3cf; }
  .wm2 { font-size: 20px; }
  .thin { stroke: #333; stroke-width: 1; }
  .thick { stroke: #8d8a86; stroke-width: 2; }
  .barl { stroke: #222; stroke-width: 1.500; }
  .ts { font: bold 24px "Liberation Serif", serif; fill: #0a0a0a; stroke: #0a0a0a; stroke-width: .6; }
  .mno { font: italic 17px "Liberation Serif", serif; fill: #111; }
  .desk { flex: 1; }
  .vscroll { width: 22px; flex: none; background: linear-gradient(#fff 56px, #f0f0f0 56px); border-right: 2px solid #8e8e8e; box-sizing: border-box; display: flex; flex-direction: column; align-items: center; padding-top: 4px; }
  .vthumb { width: 19px; height: 433px; margin-top: 38px; background: #cdcdcd; }
  .vdown { margin-top: auto; }
  .vscroll .vdown { margin-bottom: 12px; }

  .status { height: 30px; flex: none; background: #f0f0f0; display: flex; align-items: stretch; box-sizing: border-box; }
  .st { display: flex; align-items: center; justify-content: center; border-right: 1px solid #bdbdbd; box-sizing: border-box; margin: 1px 0; padding-top: 1px; white-space: nowrap; }
  .s1 { width: 83px; } .s2 { width: 73px; } .s3 { width: 66px; } .s4 { width: 82px; }
  .st-right { margin-left: auto; display: flex; align-items: center; padding-right: 11px; }
  .stsep { width: 1px; height: 29px; background: #bdbdbd; }
  .lock { margin: 0 11px; }
  .vw { width: 20px; display: flex; justify-content: center; align-items: center; height: 25px; }
  .vw.on { width: 18px; background: #fbe77e; border: 1px solid #d9b93a; border-radius: 3px; box-sizing: border-box; margin: 0 1px 0 11px; }
  .zoomv { margin: 0 6px 0 10px; width: 60px; }
  .slider { width: 112px; height: 1px; background: #777; }

  .taskbar { height: 11px; flex: none; }
  .taskbar svg { display: block; }

  .arrow { position: absolute; left: 192px; top: 120px; z-index: 5; }

  .dlg { position: absolute; left: 512px; top: 212px; width: 895px; height: 609px; box-sizing: border-box; border: 1px solid #7f7f7f; background: #f0f0f0; box-shadow: 0 0 6px rgba(0,0,0,.35); z-index: 4; }
  .dlgtitle { height: 36px; background: #fff; color: #9d9d9d; display: flex; align-items: center; padding-left: 9px; }
  .dlgbody { display: grid; grid-template-columns: 324px 178px 350px; column-gap: 8px; padding: 13px 0 0 13px; }
  .gbox { margin-top: 10px; height: 498px; box-sizing: border-box; border: 1px solid #dadada; padding: 0 11px; }
  .legend { width: fit-content; margin: -11px 0 0 -1px; height: 21px; background: #f0f0f0; display: flex; align-items: center; }
  .frow { display: flex; height: 26px; align-items: center; margin-top: 7px; }
  .frow.first { margin-top: 11px; }
  .frow label, .flabel { width: 67px; flex: none; text-align: right; padding-right: 6px; box-sizing: border-box; white-space: nowrap; }
  .field { flex: 1; min-width: 0; height: 26px; box-sizing: border-box; border: 1px solid #7a7a7a; background: #fff; padding: 0; margin: 0; outline: 0; }
  .combo { flex: 1; height: 26px; box-sizing: border-box; border: 1px solid #adadad; background: #e1e1e1; display: flex; align-items: center; padding-left: 4px; position: relative; }
  .cbarrow { margin-left: auto; margin-right: 6px; width: 0; height: 0; border: 3.500px solid transparent; border-top: 4px solid #111; border-bottom: 0; }
  .lbox { margin-top: 7px; height: 400px; box-sizing: border-box; border: 1px solid #828790; background: #fff; display: flex; }
  .litems { flex: 1; padding-left: 50px; }
  .li { height: 22px; display: flex; align-items: center; padding-left: 4px; white-space: nowrap; }
  .li.sel { background: #d6d6d6; }
  .lscroll { width: 21px; flex: none; display: flex; flex-direction: column; align-items: center; background: #fff; }
  .lthumb { width: 19px; height: 88px; margin-top: 137px; background: #cdcdcd; }
  .chk { margin-top: 15px; display: flex; align-items: center; height: 16px; gap: 6px; }
  .cb { width: 16px; height: 16px; box-sizing: border-box; border: 1px solid #333; background: #fff; }

  .mid { margin-top: 28px; display: flex; flex-direction: column; }
  .btn { height: 27px; padding-top: 1px; box-sizing: border-box; border: 1px solid #adadad; background: #e1e1e1; display: flex; align-items: center; justify-content: center; flex: none; }
  .btn.dis { background: #cccccc; border-color: #bfbfbf; color: #8a8a8a; }
  .mt9 { margin-top: 9px; }
  .mlabel { height: 22px; display: flex; align-items: center; justify-content: center; margin-bottom: 7px; }
  .ml1 { margin-top: 37px; }
  .ml2 { margin-top: 7px; }

  .rlabel { height: 20px; display: flex; align-items: center; margin-left: 1px; }
  .tbl { margin-top: 7px; height: 483px; box-sizing: border-box; border: 1px solid #828790; background: #fff; }
  .trow { display: grid; grid-template-columns: 129px 218px; }
  .trow.head { height: 31px; align-items: stretch; }
  .trow.head > div { display: flex; align-items: center; padding: 1px 0 0 5px; border-right: 1px solid #e5e5e5; box-sizing: border-box; }
  .trow.body { height: 22px; align-items: center; padding-top: 1px; box-sizing: border-box; }
  .trow.body > div { padding-left: 4px; white-space: nowrap; overflow: hidden; }
  .okrow { display: flex; justify-content: flex-end; gap: 9px; margin-top: 8px; padding-right: 1px; }
  .okb { width: 91px; }
  .grip { position: absolute; right: 2px; bottom: 2px; }

  .keypad { position: absolute; left: 1759px; top: 813px; width: 120px; height: 225px; box-sizing: border-box; background: rgba(212,212,216,.94); box-shadow: 0 1px 5px rgba(0,0,0,.3); z-index: 6; display: flex; flex-direction: column; align-items: center; }
  .kphead { width: 100%; height: 38px; background: #e9e9f1; flex: none; display: flex; align-items: center; padding: 0 1px 0 9px; box-sizing: border-box; color: #9b9ba6; }
  .kpx { margin-left: auto; width: 25px; height: 25px; background: #d2d2d8; color: #e8e8ee; display: flex; align-items: center; justify-content: center; font: 14px "Liberation Sans", sans-serif; }
  .kptabs { display: grid; grid-template-columns: repeat(6, 18px); height: 17px; margin-top: 3px; border: 1px solid #8d8d8d; flex: none; border-radius: 1px; }
  .kt { display: flex; align-items: center; justify-content: center; border-right: 1px solid #8d8d8d; height: 17px; box-sizing: border-box; }
  .kt:last-child { border-right: 0; }
  .kt.on { background: #6d8fe8; }
  .kpgrid { display: grid; grid-template-columns: repeat(4, 27px); grid-auto-rows: 27px; gap: 1px; margin-top: 3px; flex: none; }
  .kc { border: 1px solid #8d8d8d; border-radius: 2px; box-sizing: border-box; display: flex; align-items: center; justify-content: center; background: #dcdcde; }
  .tall { grid-column: 4; grid-row: 4 / span 2; }
  .wide { grid-column: 1 / span 2; grid-row: 5; }
  .dotbottom { grid-column: 3; grid-row: 5; align-items: flex-end; padding-bottom: 3px; }
  .dot { width: 4px; height: 4px; background: #111; border-radius: 50%; display: block; }
  .dash { width: 11px; height: 2px; background: #111; display: block; }
  .kg { font: bold 26px/1 "DejaVu Sans", sans-serif; color: #111; }
  .kpnums { display: grid; grid-template-columns: 22px 22px 22px 22px 22px; width: 110px; height: 17px; margin-top: 3px; border: 1px solid #8d8d8d; box-sizing: border-box; border-radius: 1px; flex: none; font: bold 13px "Liberation Sans", sans-serif; color: #444; }
  .kpnums div { display: flex; align-items: center; justify-content: center; border-right: 1px solid #8d8d8d; }
  .kpnums div:last-child { border-right: 0; }
</style>
